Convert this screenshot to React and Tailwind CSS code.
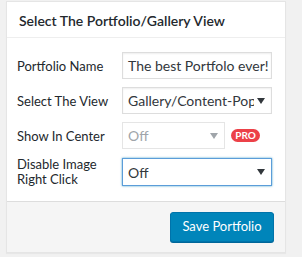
import React from "react";

const Arrow = ({ color = "#32373c" }) => (
  <svg width="8" height="6" viewBox="0 0 8 6" className="shrink-0">
    <path d="M0 0 L8 0 L4 6 Z" fill={color} />
  </svg>
);

const Row = ({ label, children }) => (
  <div className="flex items-center">
    <div className="w-[105px] shrink-0 text-[13px] leading-[14px] text-[#23282d]">{label}</div>
    {children}
  </div>
);

const App = () => {
  return (
    <div className="w-[302px] h-[257px] bg-[#f1f1f1] pl-[6px] pt-[1px] font-['Lato',sans-serif]">
      <div className="w-[280px] bg-white border border-[#e5e5e5] shadow-[0_1px_1px_rgba(0,0,0,0.04)]">
        {/* Header */}
        <div className="h-[36px] border-b border-[#eeeeee] flex items-center pl-[12px] pt-[1px]">
          <h2 className="text-[14px] font-semibold text-[#23282d]">Select The Portfolio/Gallery View</h2>
        </div>

        {/* Form */}
        <div className="pt-[14px] pb-[14px] pl-[10px] flex flex-col gap-[8px]">
          <Row label="Portfolio Name">
            <div className="w-[150px] h-[27px] border border-[#dddddd] shadow-[inset_0_1px_2px_rgba(0,0,0,0.07)] flex items-center pl-[5px] overflow-hidden whitespace-nowrap text-[14px] text-[#32373c]">
              The best Portfolo ever!
            </div>
          </Row>
          <Row label="Select The View">
            <div className="w-[150px] h-[27px] border border-[#dddddd] shadow-[inset_0_1px_2px_rgba(0,0,0,0.07)] flex items-center pl-[5px] pr-[6px] text-[14px] text-[#32373c]">
              <span className="flex-1 mr-[3px] overflow-hidden whitespace-nowrap">Gallery/Content-Popup</span>
              <Arrow />
            </div>
          </Row>
          <Row label="Show In Center">
            <div className="w-[103px] h-[27px] border border-[#e5e5e5] flex items-center pl-[5px] pr-[6px] text-[14px] text-[#a0a5aa]">
              <span className="flex-1">Off</span>
              <Arrow color="#a0a5aa" />
            </div>
            <span className="ml-[6px] h-[13px] w-[29px] rounded-full bg-[#ec4148] text-white text-[10px] font-bold leading-[13px] text-center">PRO</span>
          </Row>
          <Row label={<span className="block leading-[15px]">Disable Image<br />Right Click</span>}>
            <div className="w-[150px] h-[28px] border border-[#5b9dd9] shadow-[0_0_2px_rgba(30,140,190,0.8)] flex items-center pl-[5px] pr-[6px] text-[14px] text-[#32373c]">
              <span className="flex-1">Off</span>
              <Arrow />
            </div>
          </Row>
        </div>

        {/* Footer */}
        <div className="h-[51px] bg-[#f5f5f5] border-t border-[#dddddd] flex items-center justify-end pr-[11px]">
          <button className="h-[30px] w-[104px] rounded-[3px] bg-[#0085ba] border border-[#0073aa] shadow-[0_1px_0_#006799] text-white text-[13px]">
            Save Portfolio
          </button>
        </div>
      </div>
    </div>
  );
};

export default App;
